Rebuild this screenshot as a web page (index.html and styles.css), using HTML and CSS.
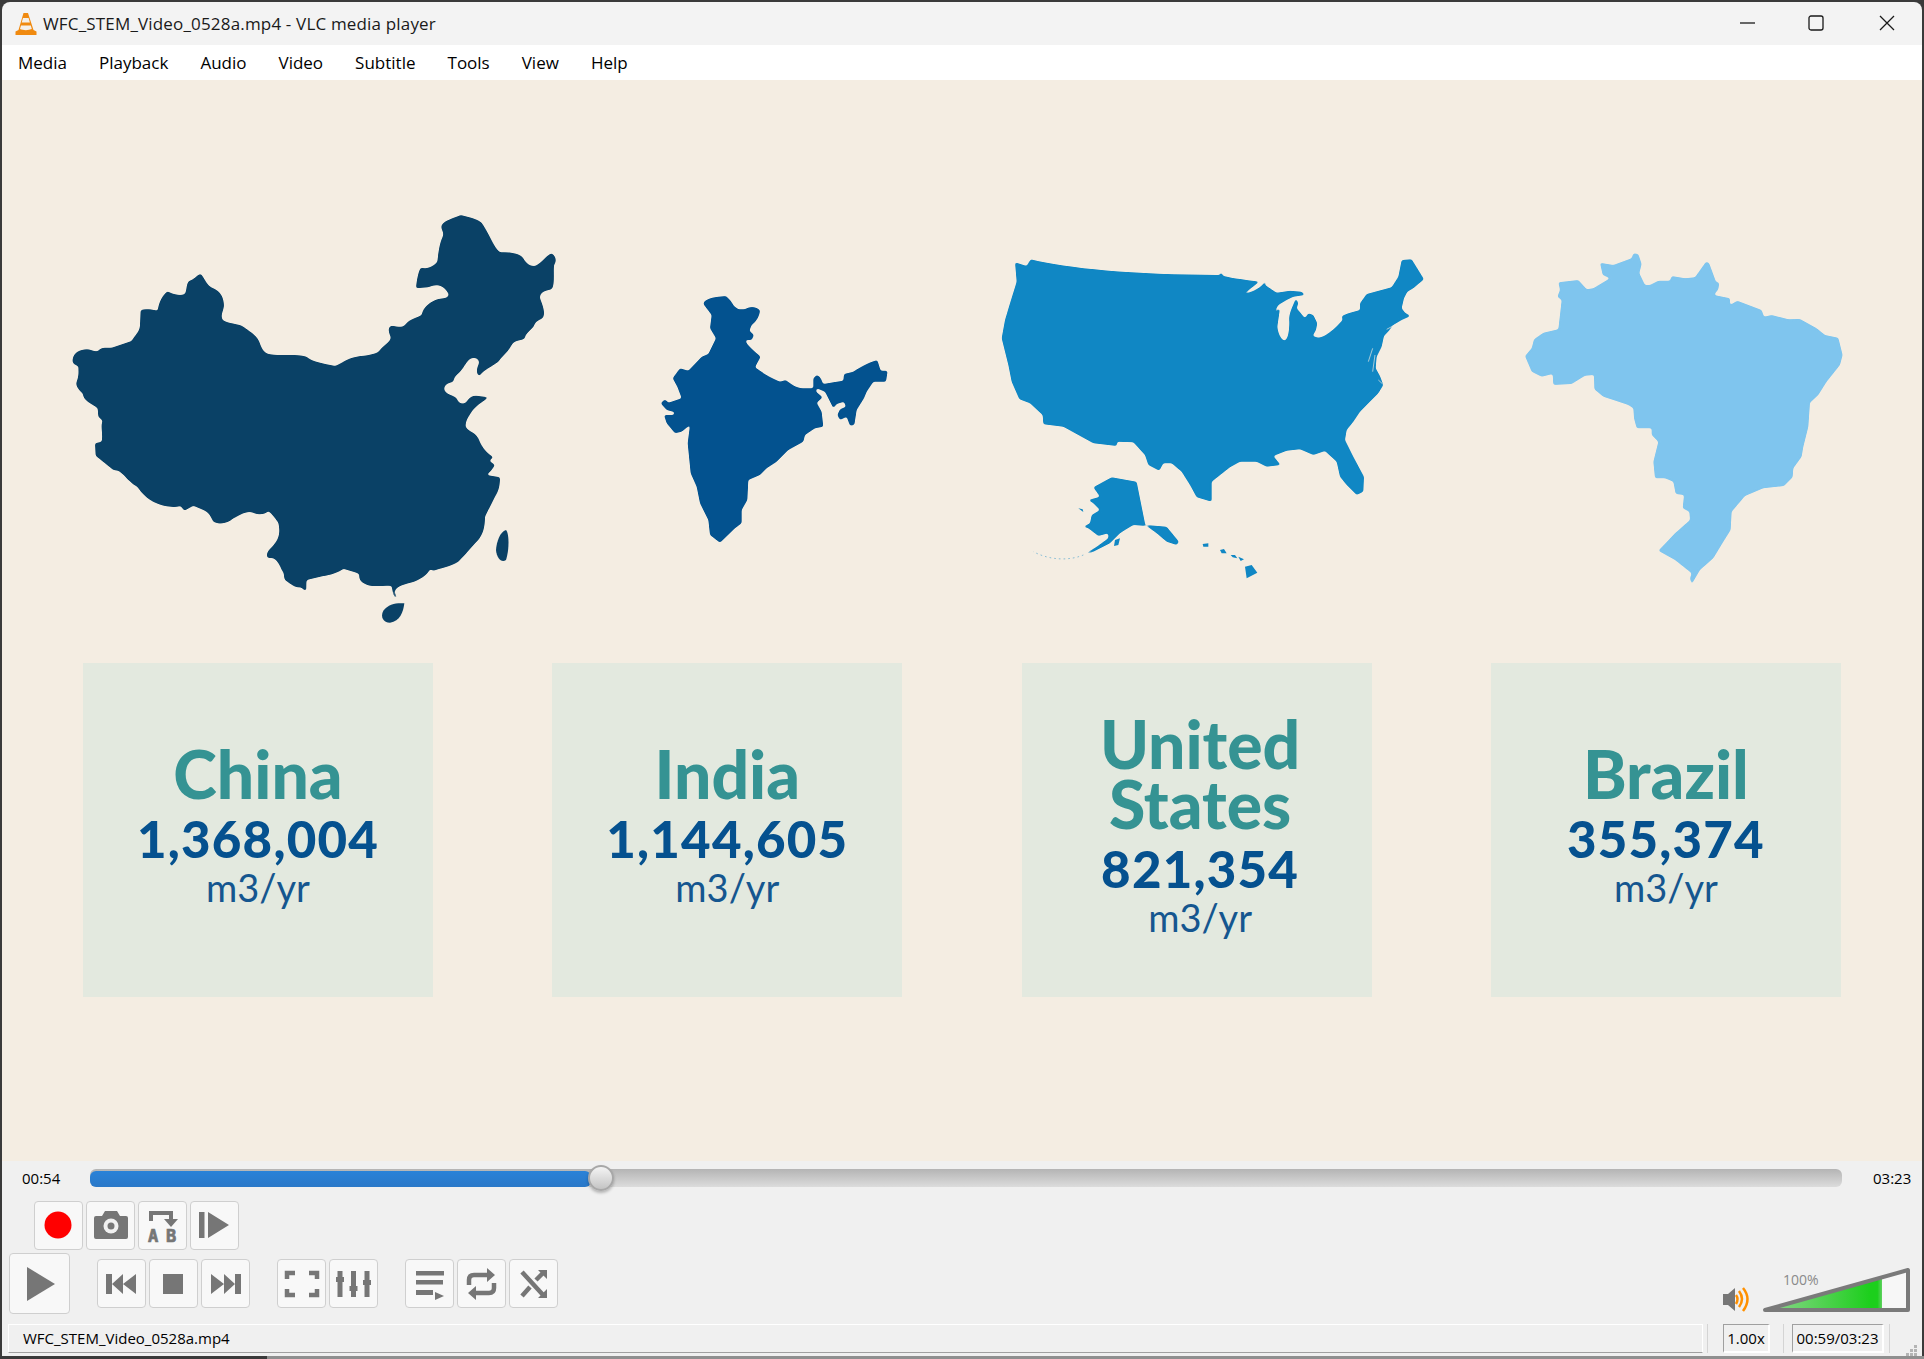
FILE: index.html

```html
<!DOCTYPE html>
<html lang="en">
<head>
    <meta charset="UTF-8">
    <title>WFC_STEM_Video_0528a.mp4 - VLC media player</title>
    <link rel="stylesheet" href="styles.css">
</head>
<body>
<div class="window">

    <div class="titlebar">
        <svg class="cone" width="22" height="24" viewBox="0 0 22 24">
            <path fill="#f08a10" d="M8.5 1h4.5l5.5 17 3 1.5v3.5h-21v-3.5l3-1.5z"/>
            <path fill="#f4f0ea" d="M8 6h5.6l1.3 4.5h-8.2zM6 13.5h9.8l1 3.5c-3.5 1.500-8.500 1.500-11.800 0z"/>
        </svg>
        <span class="title">WFC_STEM_Video_0528a.mp4 - VLC media player</span>
        <div class="winbtns">
            <svg width="16" height="16" viewBox="0 0 16 16"><path class="winicon" d="M0 8h15"/></svg>
            <svg width="16" height="16" viewBox="0 0 16 16"><rect class="winicon" x="1" y="1" width="14" height="14" rx="2"/></svg>
            <svg width="16" height="16" viewBox="0 0 16 16"><path class="winicon" d="M1 1l14 14M15 1l-14 14"/></svg>
        </div>
    </div>

    <div class="menubar">
        <span>Media</span>
        <span>Playback</span>
        <span>Audio</span>
        <span>Video</span>
        <span>Subtitle</span>
        <span>Tools</span>
        <span>View</span>
        <span>Help</span>
    </div>

    <div class="video">
        <svg class="maps" width="1920" height="583" viewBox="2 80 1920 583">
            <defs>
                <filter id="soft" color-interpolation-filters="sRGB" x="-5%" y="-5%" width="110%" height="110%">
                    <feGaussianBlur stdDeviation="3.600"/>
                    <feComponentTransfer>
                        <feFuncA type="linear" slope="3.500" intercept="-1.250"/>
                    </feComponentTransfer>
                </filter>
            </defs>
            <g class="china" transform="translate(50 200) scale(.33333)">
                <path class="soft" d="M68,478 C70,458 90,448 110,448 C125,448 135,458 145,452 C155,440 165,445 185,443 L245,423 C255,405 270,395 270,375 L272,330 C285,325 310,328 323,332 C328,300 340,285 352,274 C365,280 385,290 405,282 C412,265 408,250 418,242 C432,240 440,225 452,221 C465,235 470,258 490,265 C510,275 522,290 522,318 C520,335 510,345 518,360 C535,372 565,370 580,380 C600,395 620,405 628,425 C635,445 640,458 660,463 C690,468 740,462 770,470 C785,485 820,490 855,498 C875,490 890,475 920,470 C950,465 980,465 990,450 C1000,435 1025,425 1022,410 C1015,395 1012,380 1025,377 C1040,378 1055,385 1065,375 C1080,355 1100,355 1115,345 C1120,320 1140,305 1165,297 C1180,295 1200,295 1195,280 C1180,255 1160,250 1135,262 L1098,265 C1100,240 1105,215 1112,203 C1130,208 1150,200 1162,185 C1165,160 1168,130 1178,110 C1185,95 1170,90 1175,75 C1185,60 1210,55 1232,45 C1255,52 1280,55 1295,68 C1315,95 1330,140 1350,157 C1375,155 1405,158 1418,172 C1428,190 1440,200 1455,198 C1475,190 1490,165 1505,160 C1520,170 1520,185 1512,195 C1510,225 1515,255 1505,268 C1490,272 1468,275 1470,295 C1478,315 1488,340 1478,355 C1465,362 1455,365 1452,378 C1440,395 1425,400 1425,415 C1410,425 1395,418 1385,435 C1375,455 1360,465 1345,485 C1325,500 1300,510 1288,528 C1280,525 1278,510 1285,495 C1292,480 1280,472 1265,475 C1250,480 1245,500 1230,515 C1220,525 1212,530 1210,545 C1195,548 1180,555 1183,570 C1190,585 1210,585 1220,595 C1225,612 1240,615 1250,605 C1258,590 1270,585 1285,588 L1315,592 C1300,605 1280,615 1265,635 C1255,650 1245,665 1247,680 C1255,695 1275,695 1285,715 C1295,740 1305,755 1325,768 L1330,772 L1318,782 L1335,795 L1325,810 L1310,825 L1350,832 C1350,860 1345,875 1335,890 C1325,910 1315,930 1305,950 C1305,980 1300,1000 1285,1020 C1265,1040 1250,1060 1225,1085 C1200,1100 1170,1105 1150,1112 L1140,1108 C1130,1130 1100,1145 1075,1150 C1055,1155 1030,1165 1035,1180 L1042,1193 C1030,1195 1028,1175 1025,1158 C1005,1155 985,1160 960,1157 C935,1150 925,1140 928,1122 C915,1115 895,1112 880,1106 C865,1118 840,1125 820,1128 L770,1140 C768,1150 770,1165 768,1174 L752,1162 C735,1165 720,1150 705,1140 C700,1130 705,1120 695,1110 C690,1095 680,1080 670,1075 L652,1073 C645,1055 665,1045 675,1030 C690,1010 690,990 685,968 C675,955 665,940 655,933 C645,945 625,945 610,938 C590,930 570,945 550,955 C535,970 510,975 490,965 C480,945 475,935 455,928 L430,917 L403,932 L392,918 C370,925 335,918 320,910 C295,900 275,880 262,860 C240,850 225,825 205,812 L190,810 L137,767 L135,730 L155,725 C160,700 150,680 158,662 L145,650 L143,625 C125,610 100,605 98,580 C85,570 75,555 80,545 C88,525 85,510 85,498 C75,495 65,490 68,478 Z"/>
                <path d="M1368,990 C1378,1000 1378,1050 1368,1080 C1355,1090 1340,1075 1338,1050 C1340,1025 1350,995 1368,990 Z"/>
                <path d="M1063,1210 C1060,1235 1050,1265 1020,1268 C1000,1268 990,1250 1000,1232 C1015,1212 1040,1208 1063,1210 Z"/>
            </g>
            <g class="india" transform="translate(640 280) scale(.33333)">
                <path class="soft" d="M192,65 C210,50 240,50 258,48 L272,62 L282,78 L295,88 L315,88 C330,78 345,78 360,90 C360,105 350,125 335,135 L328,152 L342,165 L335,180 L318,180 C315,190 335,205 345,215 L362,230 L345,262 C370,280 395,295 420,305 L437,300 C450,310 465,322 485,325 L520,325 L520,295 L530,285 C545,290 545,305 550,312 L585,306 L610,302 L612,282 L640,275 C660,262 680,250 712,240 L722,272 L743,272 L738,305 L700,305 L680,335 L672,355 L650,390 L643,435 L630,437 L620,410 L600,420 L592,405 L600,388 L618,380 L612,365 L590,372 L580,385 L565,355 L555,335 L530,325 L528,335 L548,352 L530,368 L545,395 L550,440 L525,445 L495,465 L490,485 L445,510 L410,545 L380,565 L360,585 L325,600 L322,660 L305,690 L305,730 L285,745 L240,788 L210,765 L205,720 L180,670 L170,620 L152,580 L143,490 L150,435 L125,455 L105,460 L80,430 L72,405 L100,405 L105,397 L80,390 L62,370 L75,358 L85,368 L125,355 L112,320 L98,295 L120,265 L145,272 L185,230 L205,222 L228,175 L210,145 L215,105 L190,72 Z"/>
            </g>
            <g class="usa" transform="translate(1000 240) scale(.33333)">
                <path class="soft" d="M45,67 L80,78 L92,58 C200,85 400,105 660,105 L662,95 L670,108 C700,115 740,120 778,125 L730,163 C760,155 785,145 800,118 L795,135 L830,158 L870,152 L905,155 L915,165 L880,170 L860,180 L835,195 L822,218 L840,205 L832,260 C835,285 845,300 855,302 C865,295 868,270 868,245 C865,225 875,205 888,175 L895,190 L890,205 L915,235 L925,220 L940,225 L952,250 L948,270 L938,288 L955,293 C980,290 1005,265 1028,240 L1025,228 L1045,220 L1080,210 L1080,190 L1100,162 L1175,142 L1195,110 L1205,60 L1235,58 L1272,118 L1240,145 L1222,155 L1212,175 L1205,205 L1215,218 L1232,228 L1205,240 L1155,270 L1180,258 L1152,288 L1145,320 L1130,350 L1127,385 L1140,408 L1150,435 L1135,460 L1105,490 L1080,515 L1060,545 L1040,570 L1035,600 L1060,650 L1092,710 L1090,755 L1070,765 L1040,735 L1020,710 L1010,665 L975,633 L940,645 L900,628 L860,632 L820,648 L842,675 L800,680 L770,665 L720,665 L690,682 L635,725 L635,785 L590,772 L570,735 L545,695 L515,670 L490,670 L478,692 L445,675 L435,645 L400,607 L352,605 L350,618 L280,610 L190,560 L130,553 L128,525 L90,490 L58,478 L35,425 L25,375 L5,295 L15,240 L30,190 L50,125 Z"/>
                <path class="soft" d="M335,712 L410,725 L436,855 L475,858 L500,860 L537,905 L530,915 L500,905 L470,880 L440,858 L400,855 L375,870 L360,880 L330,910 L280,935 L250,945 L290,920 L325,895 L325,880 L295,888 L265,865 L250,860 L270,850 L275,825 L300,810 L280,790 L265,780 L300,770 L280,742 Z"/>
                <path d="M735,980 L755,975 L772,998 L740,1015 Z M608,912 L625,910 L625,920 L610,920 Z M660,930 L672,927 L680,940 L665,940 Z M692,945 L705,945 L712,955 L698,952 Z M715,950 L732,958 L722,963 Z M345,900 L360,895 L355,915 L342,918 Z M235,805 L248,808 L250,816 Z"/>
                <path class="chain" d="M250,945 C210,962 150,962 100,935"/>
                <path class="coast" d="M1118,325 L1105,365 M1125,345 L1118,395 M1135,420 L1148,432 M1160,268 L1190,252"/>
            </g>
            <g class="brazil" transform="translate(1510 240) scale(.33333)">
                <path class="soft" d="M370,40 L385,42 L395,72 L388,100 L405,135 L420,135 L445,122 L480,122 L485,108 L525,115 L555,112 L588,65 L597,68 L618,125 L628,128 L625,148 L612,165 L660,175 L660,195 L682,182 L755,210 L762,230 L785,225 L835,238 L870,237 L920,265 L945,285 L985,293 L998,345 L990,375 L950,425 L925,465 L900,488 L895,560 L880,620 L875,650 L850,685 L848,712 L822,738 L760,745 L705,768 L665,815 L662,870 L640,905 L610,955 L570,990 L545,1033 L540,1015 L545,1000 L495,960 L445,932 L495,880 L540,840 L538,815 L518,805 L522,765 L497,762 L490,725 L465,715 L435,715 L430,665 L445,605 L425,585 L425,565 L380,565 L372,535 L370,505 L355,495 L310,480 L280,470 L253,448 L252,405 L225,407 L185,432 L130,435 L128,402 L95,410 L65,395 L45,348 L65,325 L72,298 L100,278 L145,268 L155,180 L142,170 L150,150 L145,127 L205,120 L230,148 L250,145 L300,115 L278,105 L270,68 L310,75 L365,55 Z"/>
            </g>
        </svg>

        <div class="cards">
            <div class="card">
                <div class="country">China</div>
                <div class="amount">1,368,004</div>
                <div class="unit">m3/yr</div>
            </div>
            <div class="card">
                <div class="country">India</div>
                <div class="amount">1,144,605</div>
                <div class="unit">m3/yr</div>
            </div>
            <div class="card shift">
                <div class="country">United<br>States</div>
                <div class="amount">821,354</div>
                <div class="unit">m3/yr</div>
            </div>
            <div class="card">
                <div class="country">Brazil</div>
                <div class="amount">355,374</div>
                <div class="unit">m3/yr</div>
            </div>
        </div>
    </div>

    <div class="controls">
        <div class="seekrow">
            <span class="elapsed">00:54</span>
            <div class="track">
                <div class="fill" style="width: 28.6%"></div>
                <div class="knob" style="left: 28.4%"></div>
            </div>
            <span class="total">03:23</span>
        </div>

        <div class="btnrow extra">
            <div class="btn">
                <svg viewBox="0 0 49 49"><circle fill="#f00" cx="24" cy="24" r="13.500"/></svg>
            </div>
            <div class="btn">
                <svg viewBox="0 0 49 49">
                    <path class="ico" d="M10 15h6l3-5h12l3 5h6q2 0 2 2v19q0 2-2 2h-30q-2 0-2-2v-19q0-2 2-2z"/>
                    <circle fill="#f0f0f0" cx="25" cy="25" r="7.500"/>
                    <circle class="ico" cx="25" cy="25" r="3.500"/>
                </svg>
            </div>
            <div class="btn">
                <svg viewBox="0 0 49 49">
                    <path class="line" stroke-width="4" d="M13 20v-8h20v7"/>
                    <path class="ico" d="M26 18h14l-7 8z"/>
                    <text class="ab" x="10" y="41">A</text>
                    <text class="ab" x="28" y="41">B</text>
                </svg>
            </div>
            <div class="btn">
                <svg viewBox="0 0 49 49"><path class="ico" d="M9 11h5.500v26h-5.500zM18 11l21 13-21 13z"/></svg>
            </div>
        </div>

        <div class="btnrow main">
            <div class="btn big">
                <svg viewBox="0 0 61 61"><path class="ico" d="M18 14l28 17-28 17z"/></svg>
            </div>
            <div class="btn gap">
                <svg viewBox="0 0 49 49"><path class="ico" d="M9 15h6v20h-6zM26 15v20l-11-10zM39 15v20l-13-10z"/></svg>
            </div>
            <div class="btn">
                <svg viewBox="0 0 49 49"><path class="ico" d="M14 15h20v20h-20z"/></svg>
            </div>
            <div class="btn">
                <svg viewBox="0 0 49 49"><path class="ico" d="M40 15h-6v20h6zM23 15v20l11-10zM10 15v20l13-10z"/></svg>
            </div>
            <div class="btn gap">
                <svg viewBox="0 0 49 49"><path class="line" stroke-width="4.500" d="M10 20v-6h8M32 14h8v6M10 30v6h8M32 36h8v-6"/></svg>
            </div>
            <div class="btn">
                <svg viewBox="0 0 49 49">
                    <path class="line" stroke-width="5" d="M11 12v26M24.500 12v26M38 12v26"/>
                    <path class="ico" d="M7 18h8v5h-8zM20.500 27h8v5h-8zM34 21h8v5h-8z"/>
                </svg>
            </div>
            <div class="btn gap">
                <svg viewBox="0 0 49 49"><path class="ico" d="M11 12h28v4.500h-28zM11 21h27v4.500h-27zM11 31h17v5h-17zM30 33v8l9-4z"/></svg>
            </div>
            <div class="btn">
                <svg viewBox="0 0 49 49">
                    <path class="line" stroke-width="4.500" d="M12 26v-5q0-5 5-5h15M37 24v5q0 5-5 5h-15"/>
                    <path class="ico" d="M30 9l8 7-8 7zM19 27l-8 7 8 7z"/>
                </svg>
            </div>
            <div class="btn">
                <svg viewBox="0 0 49 49">
                    <path class="line" stroke-width="4.500" d="M13 13l22 24M13 37l8-9M27 21l8-8"/>
                    <path class="ico" d="M29 11h9v9zM38 30v9h-9z"/>
                </svg>
            </div>

            <svg class="volume" width="190" height="61" viewBox="1722 1252 190 61">
                <path class="ico" d="M1723 1293h5l7-6v23l-7-6h-5z"/>
                <path class="wave" d="M1736 1294q3 4 0 9M1739 1290q6 8 0 16M1743 1287q9 11 0 23"/>
                <defs>
                    <linearGradient id="volfill" x1="0" x2="1" y1="0" y2="0">
                        <stop offset="0" stop-color="#8fd68f"/>
                        <stop offset=".9" stop-color="#1ccf1c"/>
                        <stop offset=".96" stop-color="#1ccf1c"/>
                        <stop offset="1" stop-color="#60d060"/>
                    </linearGradient>
                </defs>
                <path class="voltri" d="M1765 1309L1908 1269V1309Z"/>
                <path fill="url(#volfill)" d="M1767 1308L1882 1277V1308Z"/>
                <path class="volline" d="M1765 1309L1908 1269V1309Z"/>
                <text class="volpct" x="1783" y="1284">100%</text>
            </svg>
        </div>

        <div class="statusbar">
            <div class="statusname">WFC_STEM_Video_0528a.mp4</div>
            <div class="statussep first"></div>
            <div class="statusbox speed">1.00x</div>
            <div class="statussep mid"></div>
            <div class="statusbox clock">00:59/03:23</div>
            <div class="statussep tight"></div>
            <svg class="grip" width="12" height="12" viewBox="0 0 12 12">
                <path fill="#b4b4b4" d="M9 1h3v3h-3zM5 5h3v3h-3zM9 5h3v3h-3zM1 9h3v3h-3zM5 9h3v3h-3zM9 9h3v3h-3z"/>
            </svg>
        </div>
    </div>

    <div class="edge"></div>
</div>
</body>
</html>
```

FILE: styles.css

```css
* { box-sizing: border-box; }
body { margin: 0; background: #3a3a3a; font-family: "Open Sans", "Noto Sans", sans-serif; color: #000; overflow: hidden; }

.window { width: 1924px; height: 1359px; padding: 2px 2px 0 2px; display: flex; flex-direction: column; }

.titlebar { height: 43px; background: #f3f3f3; border-radius: 8px 8px 0 0; display: flex; align-items: center; flex: none; }
.cone { margin-left: 13px; flex: none; }
.title { margin-left: 6px; font-size: 17px; letter-spacing: .17px; color: #1a1a1a; }
.winbtns { margin-left: auto; margin-bottom: 2px; display: flex; }
.winbtns svg { display: block; }
.winbtns svg:nth-child(1) { margin-right: 52px; }
.winbtns svg:nth-child(2) { margin-right: 55px; }
.winbtns svg:nth-child(3) { margin-right: 27px; }
.winicon { fill: none; stroke: #1a1a1a; stroke-width: 1.3; }

.menubar { height: 35px; background: #fff; display: flex; align-items: center; gap: 32px; padding-left: 16px; font-size: 17px; flex: none; }

.video { height: 1081px; background: #f4ede2; flex: none; }
.maps { display: block; }
.soft { filter: url(#soft); }
.china { fill: #0a4166; }
.india { fill: #03528f; }
.usa { fill: #1087c4; }
.brazil { fill: #7fc5ee; }
.chain { fill: none; stroke: #1087c4; stroke-width: 2; stroke-dasharray: 5 9; opacity: .7; }
.coast { fill: none; stroke: #f4ede2; stroke-width: 2; }

.cards { display: flex; gap: 119.300px; padding-left: 81px; }
.card { width: 350px; height: 334px; padding-bottom: 9px; background: #e3e9df; display: flex; flex-direction: column; align-items: center; justify-content: center; font-family: Lato, "Noto Sans", sans-serif; text-align: center; }
.shift { padding-left: 7px; }
.country { font-size: 66px; font-weight: 900; line-height: 60px; color: #359393; }
.amount { margin-top: 7px; font-size: 51px; font-weight: 900; line-height: 56px; letter-spacing: 1.200px; color: #05518f; }
.unit { font-size: 38px; line-height: 40px; color: #15568f; }

.controls { flex: 1; background: #f0f0f0; display: flex; flex-direction: column; min-height: 0; }

.seekrow { display: flex; align-items: center; height: 18px; margin-top: 8px; padding-left: 20px; font-size: 15px; }
.elapsed { width: 68px; flex: none; }
.track { flex: none; width: 1752px; height: 18px; border-radius: 6px; background: linear-gradient(#b4b4b4, #dcdcdc); position: relative; }
.fill { height: 16px; margin-top: 2px; position: absolute; left: 0; border-radius: 6px; background: linear-gradient(#2a82d8, #2a78c8); }
.knob { position: absolute; top: -4px; width: 26px; height: 26px; border-radius: 50%; background: linear-gradient(#f4f4f4, #c4c4c4); border: 2px solid #a8a8a8; box-shadow: 0 2px 3px rgba(0, 0, 0, .25); }
.total { margin-left: 31px; }

.btnrow { display: flex; align-items: flex-start; gap: 3px; flex: none; }
.extra { margin-top: 14px; padding-left: 32px; }
.main { margin-top: 3px; padding-left: 7px; height: 61px; }
.btn { width: 49px; height: 49px; flex: none; background: #f8f8f8; border: 1px solid #cfcfcf; border-radius: 4px; }
.btn svg { display: block; width: 49px; height: 49px; margin: -1px; }
.btn.big { width: 61px; height: 61px; }
.btn.big svg { width: 61px; height: 61px; }
.main .btn:not(.big) { margin-top: 6px; }
.btn.gap { margin-left: 24px; }
.ico { fill: #767676; }
.line { fill: none; stroke: #767676; }
.ab { font-family: "DejaVu Sans Mono", monospace; font-weight: 700; font-size: 17px; fill: #767676; stroke: #767676; stroke-width: .7; }

.volume { margin-left: auto; margin-right: 10px; flex: none; }
.wave { fill: none; stroke: #ff9000; stroke-width: 2.500; }
.voltri { fill: #f7f7f7; }
.volline { fill: none; stroke: #7a7a7a; stroke-width: 4; stroke-linejoin: round; }
.volpct { font-family: "Open Sans", sans-serif; font-size: 14px; fill: #8a8a8a; }

.statusbar { display: flex; align-items: stretch; height: 29px; margin-top: 10px; padding-left: 6px; font-size: 15px; position: relative; }
.statusname { width: 1695px; padding-left: 14px; line-height: 27px; border-top: 1px solid #fff; border-right: 1px solid #fff; border-bottom: 1px solid #a0a0a0; border-left: 1px solid #fff; flex: none; }
.statussep { width: 1px; background: #d4d4d4; }
.statussep.first { margin-left: 4px; }
.statussep.mid { margin-left: 13px; }
.statussep.tight { margin-left: 5px; }
.statusbox { margin-left: 15px; text-align: center; line-height: 27px; white-space: nowrap; border-top: 1px solid #a0a0a0; border-left: 1px solid #a0a0a0; border-right: 2px solid #fff; border-bottom: 2px solid #fff; flex: none; }
.speed { width: 47px; }
.statussep + .clock { margin-left: 8px; }
.clock { width: 92px; }
.grip { position: absolute; right: 5px; bottom: -3px; }

.edge { height: 3px; flex: none; margin: 0 -2px; background: linear-gradient(90deg, #3a3a3a 267px, #8f8f8f 267px); }
```
